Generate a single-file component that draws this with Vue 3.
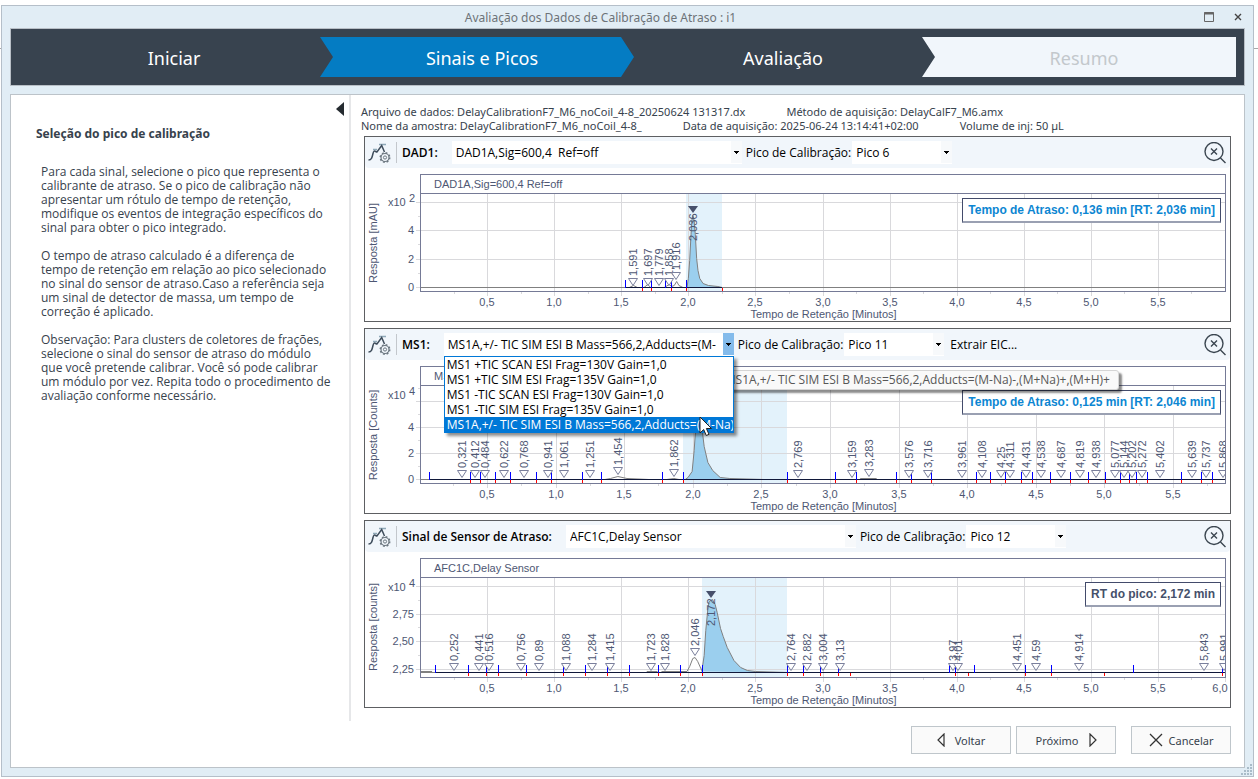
<script setup>
import { ref, onMounted, onBeforeUnmount } from 'vue'

const steps = [
  { label: 'Iniciar', state: 'done' },
  { label: 'Sinais e Picos', state: 'current' },
  { label: 'Avaliação', state: 'done' },
  { label: 'Resumo', state: 'pending' }
]

const help = [
  'Para cada sinal, selecione o pico que representa o calibrante de atraso. Se o pico de calibração não apresentar um rótulo de tempo de retenção, modifique os eventos de integração específicos do sinal para obter o pico integrado.',
  'O tempo de atraso calculado é a diferença de tempo de retenção em relação ao pico selecionado no sinal do sensor de atraso.Caso a referência seja um sinal de detector de massa, um tempo de correção é aplicado.',
  'Observação: Para clusters de coletores de frações, selecione o sinal do sensor de atraso do módulo que você pretende calibrar. Você só pode calibrar um módulo por vez. Repita todo o procedimento de avaliação conforme necessário.'
]

const menuItems = [
  'MS1 +TIC SCAN ESI Frag=130V Gain=1,0',
  'MS1 +TIC SIM ESI Frag=135V Gain=1,0',
  'MS1 -TIC SCAN ESI Frag=130V Gain=1,0',
  'MS1 -TIC SIM ESI Frag=135V Gain=1,0',
  'MS1A,+/- TIC SIM ESI B Mass=566,2,Adducts=(M-Na)-,(M+Na)+,(M+H)+'
]

const fmt = (n) => String(n).replace('.', ',')
const marks = (list, tip) => list.map((t) => ({ t, tip }))

const panels = [
  {
    id: 'dad', name: 'DAD1:', signal: 'DAD1A,Sig=600,4\u00a0 Ref=off', peak: 'Pico 6',
    caption: 'DAD1A,Sig=600,4 Ref=off', unit: 'Resposta [mAU]', exp: '2', expY: 34,
    tMin: 0, tMax: 6, top: 6, height: 153, lastTick: 5.5,
    yTicks: [{ y: 62, label: '4' }, { y: 91, label: '2' }, { y: 119, label: '0' }],
    grid: [34, 62, 91, 119], minor: [48, 76, 105],
    band: [1.98, 2.252], base: 119, baseFrom: 1.53, baseTo: 2.252,
    main: { t: 2.036, y: 38, label: '2,036' },
    labels: [...marks([1.591, 1.697, 1.779, 1.858], 117), { t: 1.911, tip: 111 }],
    text: { 1.911: '1,916' },
    starts: [1.53, 1.656, 1.723, 1.827, 1.868, 1.984],
    ends: [1.656, 1.723, 1.868, 1.984, 2.252],
    area: [[1.99, 119], [2.0, 110], [2.01, 92], [2.02, 66], [2.026, 52], [2.034, 47], [2.043, 52], [2.052, 66], [2.062, 90], [2.072, 102], [2.085, 110], [2.11, 115], [2.15, 117], [2.22, 118], [2.252, 119]],
    lines: [[[1.56, 119], [1.591, 117], [1.62, 119]], [[1.67, 119], [1.697, 116], [1.72, 119]], [[1.82, 119], [1.858, 116], [1.875, 118], [1.895, 117], [1.913, 113], [1.93, 117], [1.96, 119]]],
    note: 'Tempo de Atraso: 0,136 min [RT: 2,036 min]', noteBlue: true
  },
  {
    id: 'ms', name: 'MS1:', signal: 'MS1A,+/- TIC SIM ESI B Mass=566,2,Adducts=(M-Na)-,(M+Na)+,(M+H)+', peak: 'Pico 11',
    caption: 'MS1A,+/- TIC SIM ESI B Mass=566,2,Adducts=(M-Na)-,(M+Na)+,(M+H)+', unit: 'Resposta [Counts]', exp: '4', expY: 35,
    tMin: 0.0117, tMax: 5.879, top: 6, height: 153, lastTick: 5.5,
    yTicks: [{ y: 67, label: '4' }, { y: 93, label: '2' }, { y: 119, label: '0' }],
    grid: [41, 67, 93, 119], minor: [28, 54, 80, 106],
    band: [1.925, 2.685], base: 119, baseFrom: 0.074, baseTo: 5.879,
    main: null,
    labels: [
      ...marks([0.321, 0.412, 0.484, 0.622, 0.768, 0.941, 1.061, 1.251], 117),
      { t: 1.454, tip: 114 }, { t: 1.862, tip: 116 },
      ...marks([2.769, 3.159], 117), { t: 3.283, tip: 116 },
      ...marks([3.576, 3.716, 3.961, 4.108, 4.25, 4.311, 4.431, 4.538, 4.687, 4.819, 4.938, 5.077, 5.144, 5.202, 5.272, 5.402, 5.639, 5.737, 5.868], 117)
    ],
    text: {},
    starts: [0.074, 0.375, 0.448, 0.557, 0.666, 0.856, 0.965, 1.191, 1.332, 1.774, 1.927, 2.685, 3.035, 3.188, 3.48, 3.589, 3.735, 4.063, 4.165, 4.274, 4.391, 4.471, 4.602, 4.748, 4.879, 5.003, 5.112, 5.178, 5.229, 5.309, 5.557, 5.703, 5.783],
    ends: [0.375, 0.448, 0.557, 0.666, 0.856, 0.965, 1.191, 1.332, 1.774, 1.927, 2.685, 3.035, 3.188, 3.48, 3.589, 3.735, 4.063, 4.165, 4.274, 4.391, 4.471, 4.602, 4.748, 4.879, 5.003, 5.112, 5.178, 5.229, 5.309, 5.557, 5.703, 5.783],
    area: [[1.945, 119], [1.965, 117], [1.995, 111], [2.01, 90], [2.02, 70], [2.035, 55], [2.046, 50], [2.06, 60], [2.083, 86], [2.11, 102], [2.145, 110], [2.2, 117], [2.27, 118], [2.52, 119]],
    lines: [[[1.36, 119], [1.4, 118], [1.454, 116], [1.52, 118], [1.68, 119]], [[1.81, 119], [1.862, 118], [1.9, 119]], [[3.22, 118], [3.34, 118]]],
    note: 'Tempo de Atraso: 0,125 min [RT: 2,046 min]', noteBlue: true
  },
  {
    id: 'afc', name: 'Sinal de Sensor de Atraso:', signal: 'AFC1C,Delay Sensor', peak: 'Pico 12',
    caption: 'AFC1C,Delay Sensor', unit: 'Resposta [counts]', exp: '4', expY: 35,
    tMin: 0, tMax: 6, top: 6, height: 155, lastTick: 6,
    yTicks: [{ y: 62, label: '2,75' }, { y: 89, label: '2,50' }, { y: 117, label: '2,25' }],
    grid: [34, 62, 89, 117], minor: [48, 75, 103],
    band: [2.1, 2.734], base: 120, baseFrom: 0.11, baseTo: 6,
    main: { t: 2.172, y: 39, label: '2,172' },
    labels: [
      ...marks([0.252, 0.441, 0.516, 0.756, 0.89, 1.088, 1.284, 1.415, 1.723, 1.828], 118),
      { t: 2.046, tip: 103 },
      ...marks([2.764, 2.882, 3.004, 3.13, 3.97, 4.01, 4.451, 4.59, 4.914, 5.843, 5.991], 118)
    ],
    text: {},
    starts: [0.11, 0.356, 0.49, 0.58, 0.789, 1.064, 1.228, 1.392, 1.556, 1.772, 1.936, 2.1, 2.734, 2.853, 2.98, 3.114, 3.941, 3.986, 4.128, 4.508, 4.702, 5.312, 5.976],
    ends: [0.356, 0.49, 0.58, 0.789, 1.064, 1.228, 1.392, 1.556, 1.772, 1.936, 2.1, 2.734, 2.853, 2.98, 3.114, 3.203, 3.986, 4.083, 4.508, 4.702, 5.097, 5.976],
    area: [[2.1, 119], [2.118, 103], [2.13, 78], [2.145, 57], [2.155, 49], [2.18, 47], [2.2, 52], [2.215, 60], [2.24, 76], [2.26, 84], [2.29, 95], [2.34, 108], [2.39, 115], [2.44, 118], [2.5, 119], [2.734, 120]],
    lines: [[[0, 119], [0.09, 119]], [[1.69, 119], [1.77, 119]], [[1.8, 119], [1.99, 119], [2.01, 114], [2.033, 106], [2.05, 105], [2.07, 109], [2.1, 118]], [[3.2, 120], [3.85, 120]]],
    note: 'RT do pico: 2,172 min', noteBlue: false
  }
]

const list = ref(null)
const width = ref(865)
let observer
const measure = () => { if (list.value) width.value = list.value.clientWidth - 2 }
onMounted(() => {
  measure()
  observer = new ResizeObserver(measure)
  observer.observe(list.value)
})
onBeforeUnmount(() => observer && observer.disconnect())

const LEFT = 55
const right = () => width.value - 5
const px = (p, t) => Math.round(LEFT + ((t - p.tMin) / (p.tMax - p.tMin)) * (right() - LEFT))
const bottom = (p) => p.top + (p.id === 'afc' ? 119 : 117)
const points = (p, arr) => arr.map(([t, y]) => `${LEFT + ((t - p.tMin) / (p.tMax - p.tMin)) * (right() - LEFT)},${y + 0.5}`).join(' ')
const major = (p) => {
  const out = []
  for (let t = 0.5; t <= p.lastTick; t += 0.5) out.push(t)
  return out
}
const minorX = (p) => {
  const out = []
  for (let t = 0.25; t <= p.tMax; t += 0.5) out.push(t)
  return out
}
</script>

<template>
  <div class="desktop">
    <section class="window">
      <header class="titlebar">
        <h1>Avaliação dos Dados de Calibração de Atraso : i1</h1>
        <div class="controls">
          <button type="button" aria-label="Maximizar">
            <svg width="12" height="12" viewBox="0 0 12 12"><path d="M1.5 1.5h9v9h-9z" fill="none" stroke="#666" /><path d="M1 2.5h10" stroke="#666" stroke-width="2" /></svg>
          </button>
          <button type="button" aria-label="Fechar">
            <svg width="12" height="12" viewBox="0 0 12 12"><path d="M3 3l6 6M9 3l-6 6" stroke="#444" stroke-width="1.4" /></svg>
          </button>
        </div>
      </header>

      <nav class="wizard" aria-label="Etapas">
        <button v-for="s in steps" :key="s.label" type="button" class="step" :class="s.state">{{ s.label }}</button>
      </nav>

      <div class="content">
        <aside class="side">
          <button type="button" class="collapse" aria-label="Recolher">
            <svg width="8" height="14" viewBox="0 0 8 14"><path d="M8 0v14L0 7z" fill="#252b30" /></svg>
          </button>
          <h2>Seleção do pico de calibração</h2>
          <p v-for="(h, i) in help" :key="i">{{ h }}</p>
        </aside>

        <main class="main">
          <div class="info">
            <div><span>Arquivo de dados: DelayCalibrationF7_M6_noCoil_4-8_20250624 131317.dx</span><span>Método de aquisição: DelayCalF7_M6.amx</span></div>
            <div><span>Nome da amostra: DelayCalibrationF7_M6_noCoil_4-8_</span><span>Data de aquisição: 2025-06-24 13:14:41+02:00</span><span>Volume de inj: 50 µL</span></div>
          </div>

          <div ref="list" class="panels">
            <article v-for="p in panels" :key="p.id" class="panel">
              <div class="toolbar">
                <button type="button" class="tool" aria-label="Eventos de integração">
                  <svg width="24" height="22" viewBox="0 0 24 22" fill="none">
                    <path d="M5 7.5h4M11 2.5h7" stroke="#8fa9b8" stroke-width="1.4" />
                    <path d="M0.5 18c3 0 3.500-2 4.500-6.500c1-4 2-2 4-1.500L13.700 3.500L16.500 10" stroke="#3f4d5c" stroke-width="1.500" />
                    <circle cx="17" cy="15.500" r="4" stroke="#6c7780" stroke-width="1.200" />
                    <circle cx="17" cy="15.500" r="4.800" stroke="#6c7780" stroke-width="1.400" stroke-dasharray="1.900 1.870" />
                    <circle cx="17" cy="15.500" r="1.600" stroke="#6c7780" />
                  </svg>
                </button>
                <span class="sep"></span>
                <label :for="p.id + '-signal'" class="name">{{ p.name }}</label>
                <span class="combo signal" :class="{ open: p.id === 'ms' }">
                  <select :id="p.id + '-signal'"><option>{{ p.signal }}</option></select>
                  <svg class="arrow" width="11" height="22" viewBox="0 0 11 22" aria-hidden="true"><path d="M3 10h5v1h-1v1h-1v1h-1v-1h-1v-1h-1z" fill="#000" /></svg>
                  <ul v-if="p.id === 'ms'" class="menu" role="listbox" aria-label="Sinais">
                    <li v-for="(m, i) in menuItems" :key="m" role="option" :aria-selected="i === 4" :class="{ on: i === 4 }">{{ m }}</li>
                  </ul>
                  <span v-if="p.id === 'ms'" class="tip" role="tooltip">{{ p.signal }}</span>
                  <svg v-if="p.id === 'ms'" class="cursor" width="14" height="21" viewBox="0 0 14 21"><path d="M1 1v16l3.700-3.500l2.600 6l2.700-1.200l-2.600-5.800h5.100z" fill="#fff" stroke="#222" /></svg>
                </span>
                <label :for="p.id + '-peak'">Pico de Calibração:</label>
                <span class="combo peak">
                  <select :id="p.id + '-peak'"><option>{{ p.peak }}</option></select>
                  <svg class="arrow" width="11" height="22" viewBox="0 0 11 22" aria-hidden="true"><path d="M3 10h5v1h-1v1h-1v1h-1v-1h-1v-1h-1z" fill="#000" /></svg>
                </span>
                <button v-if="p.id === 'ms'" type="button" class="extract">Extrair EIC...</button>
                <button type="button" class="tool zoom" aria-label="Redefinir zoom">
                  <svg width="22" height="22" viewBox="0 0 22 22" fill="none" stroke="#3b4650" stroke-width="1.400">
                    <circle cx="10" cy="9.500" r="9" /><path d="M16.500 16l5 5M7 6.500l6 6M13 6.500l-6 6" />
                  </svg>
                </button>
              </div>

              <div class="plot">
                <svg class="chart" :width="width" :height="p.height">
                  <defs>
                    <clipPath :id="'clip-' + p.id"><rect :x="LEFT" :y="p.top" :width="right() - LEFT" :height="bottom(p) - p.top" /></clipPath>
                  </defs>
                  <rect :x="px(p, p.band[0])" :y="p.top + 19" :width="px(p, p.band[1]) - px(p, p.band[0])" :height="bottom(p) - p.top - 19" fill="#e3f2fb" />
                  <g shape-rendering="crispEdges" stroke="#d9d9dc">
                    <line v-for="y in p.grid" :key="'g' + y" :x1="LEFT - 4" :x2="right()" :y1="y + 0.5" :y2="y + 0.5" />
                    <line v-for="y in p.minor" :key="'m' + y" :x1="LEFT - 2" :x2="LEFT" :y1="y + 0.5" :y2="y + 0.5" />
                    <line v-for="t in major(p)" :key="'x' + t" :x1="px(p, t) + 0.5" :x2="px(p, t) + 0.5" :y1="p.top + 19" :y2="bottom(p) + 5" />
                    <line v-for="t in minorX(p)" :key="'n' + t" :x1="px(p, t) + 0.5" :x2="px(p, t) + 0.5" :y1="bottom(p)" :y2="bottom(p) + 3" />
                  </g>
                  <g :clip-path="`url(#clip-${p.id})`">
                    <polygon :points="points(p, p.area)" fill="#9bcfee" />
                    <g shape-rendering="crispEdges">
                      <line :x1="LEFT" :x2="right()" :y1="p.base + 0.5" :y2="p.base + 0.5" stroke="#808080" />
                    </g>
                    <polyline :points="points(p, p.area)" fill="none" stroke="#808080" />
                    <polyline v-for="(l, i) in p.lines" :key="i" :points="points(p, l)" fill="none" stroke="#808080" />
                    <g shape-rendering="crispEdges">
                      <line :x1="px(p, p.baseFrom)" :x2="px(p, p.baseTo)" :y1="p.base + 0.5" :y2="p.base + 0.5" stroke="#10183a" />
                      <line v-for="t in p.starts" :key="'s' + t" :x1="px(p, t) + 0.5" :x2="px(p, t) + 0.5" :y1="p.base - 7" :y2="p.base + 1" stroke="#00f" />
                      <line v-for="t in p.ends" :key="'e' + t" :x1="px(p, t) + 0.5" :x2="px(p, t) + 0.5" :y1="p.base + 1" :y2="p.base + 4" stroke="#f00" />
                    </g>
                    <g v-for="l in p.labels" :key="l.t" :transform="`translate(${px(p, l.t)},${l.tip})`">
                      <path d="M-4.500 -6.500h9L0 0.500z" fill="#fff" stroke="#7a7f9c" />
                      <text transform="rotate(-90)" x="9" y="4">{{ p.text[l.t] || fmt(l.t) }}</text>
                    </g>
                    <g v-if="p.main" :transform="`translate(${px(p, p.main.t)},${p.main.y})`">
                      <path d="M-5 0h10L0 7z" fill="#47506b" />
                      <text transform="rotate(-90)" x="-35" y="4">{{ p.main.label }}</text>
                    </g>
                  </g>
                  <g shape-rendering="crispEdges" fill="none" stroke="#757a96">
                    <rect :x="LEFT + 0.5" :y="p.top + 0.5" :width="right() - LEFT" :height="bottom(p) - p.top" />
                    <line :x1="LEFT" :x2="right()" :y1="p.top + 19.5" :y2="p.top + 19.5" />
                  </g>
                  <text :x="LEFT + 14" :y="p.top + 14">{{ p.caption }}</text>
                  <text :x="23" :y="p.expY + 4">x10</text>
                  <text :x="44" :y="p.expY">{{ p.exp }}</text>
                  <text v-for="k in p.yTicks" :key="k.label" class="end" :x="LEFT - 6" :y="k.y + 4">{{ k.label }}</text>
                  <text v-for="t in major(p)" :key="'l' + t" class="mid" :x="Math.min(px(p, t), width - 10)" :y="bottom(p) + 15">{{ t.toFixed(1).replace('.', ',') }}</text>
                  <text class="mid" :x="(LEFT + right()) / 2 + 1" :y="bottom(p) + 27">Tempo de Retenção [Minutos]</text>
                  <text class="mid" transform="translate(12,75) rotate(-90)">{{ p.unit }}</text>
                </svg>
                <div class="note" :class="{ blue: p.noteBlue }">{{ p.note }}</div>
              </div>
            </article>
          </div>
          <footer class="actions">
            <button type="button">
              <svg width="8" height="14" viewBox="0 0 8 14" fill="none" stroke="#333" stroke-width="1.200"><path d="M7 1v12L1 7z" /></svg>Voltar
            </button>
            <button type="button">
              Próximo<svg width="8" height="14" viewBox="0 0 8 14" fill="none" stroke="#333" stroke-width="1.200"><path d="M1 1v12L7 7z" /></svg>
            </button>
            <button type="button" class="cancel">
              <svg width="14" height="14" viewBox="0 0 14 14" fill="none" stroke="#333" stroke-width="1.300"><path d="M1 1l12 12M13 1L1 13" /></svg>Cancelar
            </button>
          </footer>
        </main>
      </div>
      <svg class="grip" width="12" height="12" viewBox="0 0 12 12" fill="#a9bcc9" aria-hidden="true">
        <path d="M9 0h2v2H9zM6 3h2v2H6zM9 3h2v2H9zM3 6h2v2H3zM6 6h2v2H6zM9 6h2v2H9zM0 9h2v2H0zM3 9h2v2H3zM6 9h2v2H6zM9 9h2v2H9z" />
      </svg>
    </section>
  </div>
</template>

<style scoped>
* { box-sizing: border-box; }
.desktop {
  min-height: 100vh;
  display: flex;
  padding: 5px 4px 2px 1px;
  background: linear-gradient(#a8a8a8, #a8a8a8) 0 48px / 100% 1px no-repeat #fff;
  font-family: "Noto Sans", sans-serif;
  color: #37424d;
}
button { font: inherit; color: inherit; background: none; border: 0; padding: 0; }
.window {
  position: relative;
  flex: 1;
  min-width: 0;
  display: flex;
  flex-direction: column;
  padding: 0 8px 8px;
  border: 1px solid #b5bfc9;
  background: #e1edf5;
}
.titlebar { position: relative; height: 22px; display: flex; align-items: center; justify-content: center; }
.titlebar h1 { margin: 0; padding-right: 54px; font-size: 12px; font-weight: 400; color: #6d7378; }
.controls { position: absolute; right: 1px; display: flex; gap: 17px; }
.controls svg, .tool svg, .collapse svg { display: block; }
.wizard { display: flex; height: 58px; padding: 8px; background: #38434f; border: 1px solid #b8bfc6; }
.step { flex: 1; height: 40px; margin-left: -13px; padding: 2px 2px 0 12px; font-size: 18px; color: #fff; }
.step:first-child { margin-left: 0; padding: 2px 9px 0 5px; }
.step.current { background: #047cc3; clip-path: polygon(0 0, calc(100% - 13px) 0, 100% 50%, calc(100% - 13px) 100%, 0 100%, 13px 50%); }
.step.pending { background: #f1f6fb; color: #c3c8cc; clip-path: polygon(0 0, 100% 0, 100% 100%, 0 100%, 13px 50%); }
.content { flex: 1; display: flex; margin-top: 8px; background: #fff; border: 1px solid #bcc3c9; }
.side {
  position: relative;
  flex: none;
  width: 340px;
  margin-bottom: 46px;
  padding: 30px 16px 0 30px;
  border-right: 2px solid #e6e7e9;
  font-size: 12px;
  line-height: 14px;
}
.side h2 { margin: 0 0 23px -5px; font-size: 12px; line-height: 17px; }
.side p { margin: 0 0 14px; font-family: "Open Sans", sans-serif; }
.collapse { position: absolute; right: 5px; top: 7px; }
.main { flex: 1; min-width: 0; padding: 10px 13px 12px 13px; }
.info { margin-left: -3px; height: 31px; font-size: 11px; line-height: 14px; white-space: nowrap; }
.info span { margin-right: 41px; }
.panels { display: flex; flex-direction: column; gap: 6px; }
.panel { border: 1px solid #5d5f62; background: #fff; }
.toolbar { display: flex; align-items: center; height: 31px; padding: 0 4px 0 3px; background: #f1f6fb; font-family: "Open Sans", sans-serif; font-size: 12px; color: #000; white-space: nowrap; border-radius: 0 0 4px 4px; }
.sep { width: 1px; height: 21px; margin: 0 5px 0 4px; background: #c3c7cc; }
.name { font-weight: 600; }
.combo { position: relative; display: flex; height: 23px; margin: 0 4px 0 14px; background: #fff; }
.combo select { appearance: none; width: 100%; height: 23px; padding: 0 18px 0 4px; border: 0; background: transparent; font: inherit; color: inherit; }
.arrow { position: absolute; right: 0; top: 0; background: #f7f9fb; pointer-events: none; }
.signal { width: 290px; }
.open .arrow { background: #84bbeb; }
.peak { width: 100px; margin-left: 1px; }
.extract { margin-left: 2px; }
.zoom { margin-left: auto; }
.menu {
  position: absolute; z-index: 3; left: 0; right: 0; top: 23px;
  margin: 0; padding: 0; list-style: none;
  border: 1px solid #0078d7; background: #fff; box-shadow: 3px 3px 3px rgba(0, 0, 0, .45);
}
.menu li { height: 15px; line-height: 15px; padding-left: 2px; overflow: hidden; }
.menu .on { background: #0078d7; color: #fff; }
.tip {
  position: absolute; z-index: 2; left: 275px; top: 37px; height: 20px; line-height: 18px; padding: 0 8px 0 5px;
  border: 1px solid #d5d5d5; border-radius: 3px; background: #f9f9f9; color: #575757; box-shadow: 3px 3px 2px rgba(0, 0, 0, .45);
}
.cursor { position: absolute; z-index: 4; left: 255px; top: 83px; }
.plot { position: relative; }
.chart { display: block; font-family: "Liberation Sans", sans-serif; font-size: 11px; }
.chart text { fill: #4e5773; }
.chart .mid { text-anchor: middle; }
.chart .end { text-anchor: end; }
.note {
  position: absolute; right: 9px; top: 30px; height: 25px; padding: 0 5px;
  border: 1px solid #434b6b; border-bottom: 2px solid #9aa0b2; background: #fff;
  font: 700 12px/22px "Liberation Sans", sans-serif; color: #45506a;
}
.note.blue { color: #0c86d2; }
.actions { display: flex; justify-content: flex-end; gap: 5px; margin-top: 18px; font-size: 11px; }
.actions button { display: flex; align-items: center; justify-content: center; gap: 10px; width: 100px; height: 28px; border: 1px solid #bfc6cb; background: #fafafa; }
.actions .cancel { margin-left: 10px; gap: 6px; }
.grip { position: absolute; right: 0; bottom: 0; }
</style>

<style>
html, body { background: #fff; }
</style>
